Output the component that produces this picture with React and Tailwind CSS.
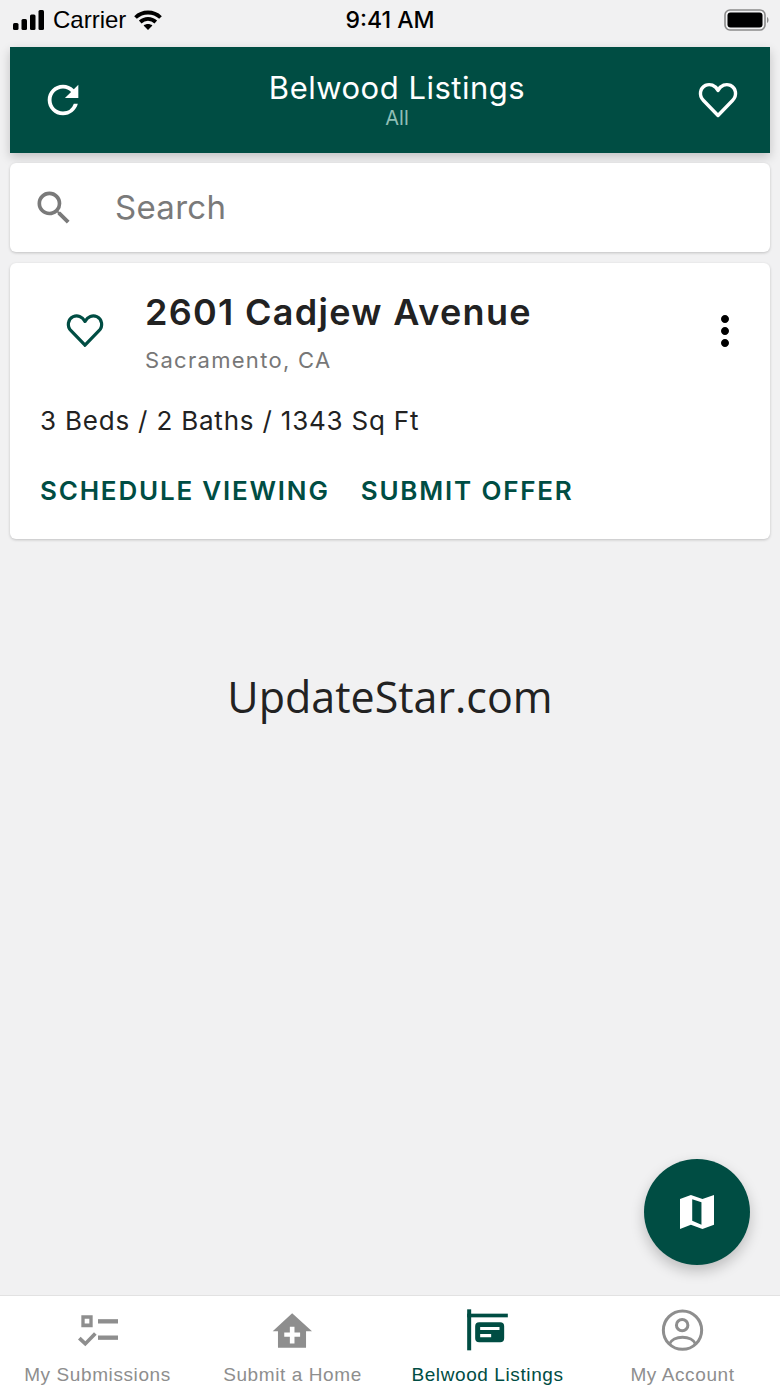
import React from 'react'
import { MdRefresh, MdSearch, MdMoreVert } from 'react-icons/md'

const HeartIcon = ({ className }) => (
  <svg viewBox="0 0 40 36" className={className} fill="none" stroke="currentColor" strokeWidth="3.4" strokeLinejoin="round">
    <path d="M20 33.5 L5.5 18.5 C0.5 13.5 2 6 7.5 3.4 C12 1.4 17.2 3.2 20 8.4 C22.8 3.2 28 1.4 32.5 3.4 C38 6 39.5 13.5 34.5 18.5 Z" />
  </svg>
)

const SignalIcon = () => (
  <svg viewBox="0 0 32 20" className="h-5 w-8" fill="currentColor">
    <rect x="0" y="13" width="5.5" height="7" rx="1.5" />
    <rect x="8.5" y="9" width="5.5" height="11" rx="1.5" />
    <rect x="17" y="4.5" width="5.5" height="15.5" rx="1.5" />
    <rect x="25.5" y="0" width="5.5" height="20" rx="1.5" />
  </svg>
)

const WifiIcon = () => (
  <svg viewBox="0 0 28 20" className="h-5 w-7" fill="none" stroke="currentColor" strokeWidth="3.8">
    <path d="M1.5 7.5 C8.5 0.8 19.5 0.8 26.5 7.5" />
    <path d="M6.2 12 C10.8 7.8 17.2 7.8 21.8 12" />
    <path d="M14 20 L9.6 15.4 C12 13.4 16 13.4 18.4 15.4 Z" fill="currentColor" stroke="none" />
  </svg>
)

const BatteryIcon = () => (
  <svg viewBox="0 0 46 22" className="h-[22px] w-[46px]">
    <rect x="1" y="1" width="40" height="20" rx="5" fill="none" stroke="#8a8a8a" strokeWidth="1.6" />
    <rect x="3.5" y="3.5" width="35" height="15" rx="3" fill="#000" />
    <path d="M43 8 C45 9 45 13 43 14 Z" fill="#8a8a8a" />
  </svg>
)

const MapIcon = () => (
  <svg viewBox="180 163 103 103" className="h-[34px] w-[34px]" fill="#ffffff">
    <path
      fillRule="evenodd"
      d="M180 175 L213 163 L248 175 L283 163 L283 253 L248 266 L213 253 L180 266 Z M217 176 L245 185 L245 253 L217 241 Z"
    />
  </svg>
)

const SubmissionsIcon = () => (
  <svg viewBox="228 72 120 98" className="h-[33px] w-10" fill="#8e8e8e">
    <path fillRule="evenodd" d="M238 75 H272 V111 H238 Z M248 86 V100 H262 V86 Z" />
    <rect x="288" y="87" width="60" height="13" />
    <rect x="288" y="136" width="60" height="13" />
    <path d="M228 148 L236 140 L250 153 L276 126 L284 134 L250 168 Z" />
  </svg>
)

const HomePlusIcon = () => (
  <svg viewBox="818 63 122 106" className="h-[35px] w-[41px]" fill="#8e8e8e">
    <path
      fillRule="evenodd"
      d="M878 64 L938 118 H920 V168 H835 V118 H819 Z M871 105 V122 H854 V135 H871 V155 H885 V135 H902 V122 H885 V105 Z"
    />
  </svg>
)

const ListingsIcon = () => (
  <svg viewBox="228 56 128 126" className="h-[42px] w-[43px]" fill="#004d43">
    <rect x="231" y="57" width="12" height="123" />
    <rect x="231" y="70" width="122" height="11" />
    <path
      fillRule="evenodd"
      d="M267 96 H330 A12 12 0 0 1 342 108 V144 A12 12 0 0 1 330 156 H267 A12 12 0 0 1 255 144 V108 A12 12 0 0 1 267 96 Z M270 110 V119 H328 V110 Z M270 131 V141 H303 V131 Z"
    />
  </svg>
)

const AccountIcon = () => (
  <svg viewBox="814 55 128 128" className="h-[43px] w-[43px]" fill="none" stroke="#8e8e8e" strokeWidth="9">
    <circle cx="878" cy="118" r="57" />
    <circle cx="877" cy="103" r="17" />
    <path d="M838 161 C850 132 906 132 918 161" />
  </svg>
)

const tabs = [
  { label: 'My Submissions', icon: <SubmissionsIcon />, tone: 'text-[#8e8e8e]' },
  { label: 'Submit a Home', icon: <HomePlusIcon />, tone: 'text-[#8e8e8e]' },
  { label: 'Belwood Listings', icon: <ListingsIcon />, tone: 'text-[#004d43]' },
  { label: 'My Account', icon: <AccountIcon />, tone: 'text-[#8e8e8e]' },
]

const StatusBar = () => (
  <div className="relative flex h-[40px] items-center justify-between px-[13px] text-black">
    <div className="flex items-center gap-[8px]">
      <SignalIcon />
      <span className="font-['Liberation_Sans',sans-serif] text-[24px] leading-none">Carrier</span>
      <WifiIcon />
    </div>
    <span className="absolute left-0 right-0 text-center font-['Inter',sans-serif] text-[23px] font-medium leading-none">9:41 AM</span>
    <div className="-mr-[3px]">
      <BatteryIcon />
    </div>
  </div>
)

const App = () => {
  return (
    <div className="relative flex h-[1387px] w-[780px] flex-col overflow-hidden bg-[#f1f1f2] font-['Inter',sans-serif]">
      <StatusBar />

      <main className="flex flex-1 flex-col px-[10px] pt-[7px]">
        <header className="flex h-[106px] items-center bg-[#004d43] pl-[30px] pr-[32px] text-white shadow-[0_4px_10px_rgba(0,0,0,0.2)]">
          <MdRefresh className="h-[46px] w-[46px] shrink-0" />
          <div className="-mt-[3px] flex-1 pl-[10px] text-center">
            <h1 className="text-[31px] leading-[38px] tracking-[0.5px]">Belwood Listings</h1>
            <p className="text-[20px] leading-[22px] text-[#8fbfb6]">All</p>
          </div>
          <HeartIcon className="h-[36px] w-[40px] shrink-0" />
        </header>

        <div className="mt-[10px] flex h-[89px] items-center rounded-[6px] bg-white pl-[22px] shadow-[0_1px_3px_rgba(0,0,0,0.2)]">
          <MdSearch className="h-[44px] w-[44px] text-[#7a7a7a]" />
          <span className="ml-[39px] text-[33px] tracking-[0.3px] text-[#7a7a7a]">Search</span>
        </div>

        <article className="mt-[11px] h-[276px] rounded-[6px] bg-white px-[30px] shadow-[0_1px_3px_rgba(0,0,0,0.2)]">
          <div className="flex items-start pt-[26px]">
            <HeartIcon className="ml-[26px] mt-[24px] h-[35px] w-[38px] shrink-0 text-[#004d43]" />
            <div className="ml-[41px] flex-1">
              <h2 className="text-[36px] font-semibold leading-[46px] tracking-[1.3px] text-[#222222]">2601 Cadjew Avenue</h2>
              <p className="mt-[11px] text-[22px] leading-[28px] tracking-[1.3px] text-[#777777]">Sacramento, CA</p>
            </div>
            <MdMoreVert className="mr-[-9px] mt-[18px] h-[48px] w-[48px] shrink-0 text-black" />
          </div>
          <p className="mt-[30px] text-[26px] leading-[34px] tracking-[0.8px] text-[#222222]">3 Beds / 2 Baths / 1343 Sq Ft</p>
          <div className="mt-[36px] flex gap-[31px] text-[26px] font-semibold leading-[34px] tracking-[1.8px] text-[#004d43]">
            <span>SCHEDULE VIEWING</span>
            <span>SUBMIT OFFER</span>
          </div>
        </article>

        <p className="mt-[126px] text-center font-['Open_Sans',sans-serif] text-[43px] leading-[64px] text-[#222222]">UpdateStar.com</p>
      </main>

      <button className="absolute left-[644px] top-[1159px] flex h-[106px] w-[106px] items-center justify-center rounded-full bg-[#004d43] shadow-[0_6px_14px_rgba(0,0,0,0.22)]">
        <MapIcon />
      </button>

      <nav className="grid h-[92px] grid-cols-4 border-t border-[#e2e2e2] bg-white font-['Liberation_Sans',sans-serif]">
        {tabs.map((tab) => (
          <div key={tab.label} className="flex flex-col items-center">
            <div className="flex h-[60px] items-center justify-center pt-[8px]">{tab.icon}</div>
            <span className={`mt-[8px] text-[19px] leading-[22px] tracking-[0.6px] ${tab.tone}`}>{tab.label}</span>
          </div>
        ))}
      </nav>
    </div>
  )
}

export default App
